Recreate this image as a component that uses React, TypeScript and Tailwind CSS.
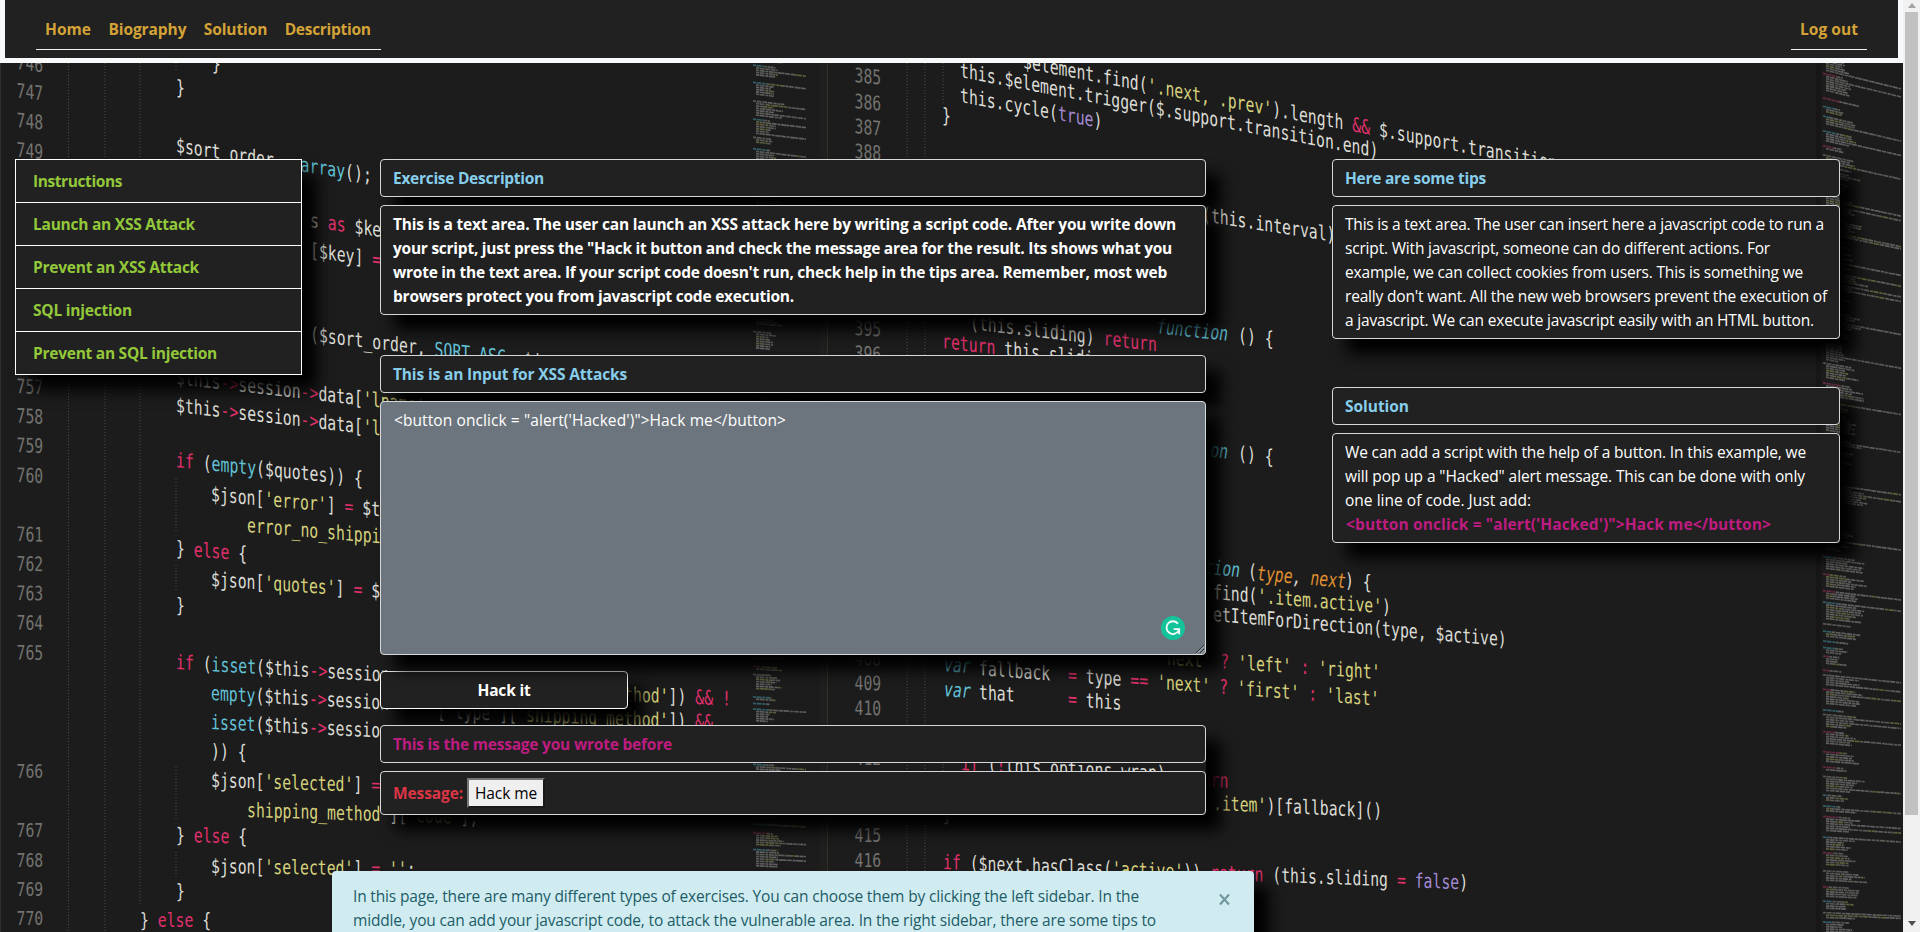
import { useLayoutEffect, useRef, useState } from "react";

const W = "#dcdcd6";
const R = "#e0306c";
const B = "#62c3d8";
const Y = "#d6d27c";
const P = "#a58ad6";
const O = "#e0912f";
const G = "#73736f";

type Seg = [string, string];
type CodeLine = { x: number; y: number; s: number; t: Seg[]; i?: boolean };

const CHAR = 8.9;

const numbersLeft: [string, number, number][] = [
  ["746", 69, 0.12], ["747", 97.5, 0.11], ["748", 127, 0.1], ["749", 156.5, 0.1],
  ["757", 393, 0.05], ["758", 422.5, 0.05], ["759", 452, 0.04], ["760", 482, 0.04],
  ["761", 541, 0.03], ["762", 570.5, 0.03], ["763", 600, 0.02], ["764", 629.5, 0.02],
  ["765", 659.5, 0.01], ["766", 778, 0], ["767", 837, 0], ["768", 866.5, 0],
  ["769", 896, 0], ["770", 925, 0],
];

const numbersRight: [string, number, number][] = [
  ["385", 82, 0.1], ["386", 108, 0.1], ["387", 133, 0.1], ["388", 158, 0.09],
  ["395", 335, 0.05], ["396", 360, 0.05], ["408", 665, 0.02], ["409", 690, 0.01],
  ["410", 715, 0.01], ["412", 765, 0], ["415", 841.5, 0], ["416", 866.5, 0],
];

const code: CodeLine[] = [
  { x: 212, y: 70, s: 0.1, t: [["}", W]] },
  { x: 176, y: 94, s: 0.1, t: [["}", W]] },
  { x: 176, y: 152, s: 0.155, t: [["$sort_order ", W], ["= ", R], ["array", B], ["();", W]] },
  { x: 310, y: 227, s: 0.14, t: [["s ", W], ["as ", R], ["$key", W]] },
  { x: 310, y: 257, s: 0.14, t: [["[$key] ", W], ["=", R]] },
  { x: 310, y: 341, s: 0.12, t: [["($sort_order, ", W], ["SORT_ASC", B], [", $json", W]] },
  { x: 176, y: 384, s: 0.115, t: [["$this", W], ["->", R], ["session", W], ["->", R], ["data[", W], ["'lname'", Y]] },
  { x: 176, y: 412, s: 0.115, t: [["$this", W], ["->", R], ["session", W], ["->", R], ["data[", W], ["'l", Y]] },
  { x: 176, y: 467, s: 0.1, t: [["if ", R], ["(", W], ["empty", B], ["($quotes)) {", W]] },
  { x: 211, y: 501, s: 0.09, t: [["$json[", W], ["'error'", Y], ["] ", W], ["=", R], [" $th", W]] },
  { x: 247, y: 532, s: 0.085, t: [["error_no_shipping", Y]] },
  { x: 176, y: 555, s: 0.08, t: [["} ", W], ["else ", R], ["{", W]] },
  { x: 211, y: 586, s: 0.07, t: [["$json[", W], ["'quotes'", Y], ["] ", W], ["=", R], [" $t", W]] },
  { x: 176, y: 612, s: 0.05, t: [["}", W]] },
  { x: 176, y: 669, s: 0.06, t: [["if ", R], ["(", W], ["isset", B], ["($this", W], ["->", R], ["session", W]] },
  { x: 211, y: 700, s: 0.055, t: [["empty", B], ["($this", W], ["->", R], ["session->", W]] },
  { x: 211, y: 729, s: 0.05, t: [["isset", B], ["($this", W], ["->", R], ["session", W]] },
  { x: 211, y: 758, s: 0.03, t: [[")) {", W]] },
  { x: 211, y: 787, s: 0.03, t: [["$json[", W], ["'selected'", Y], ["] ", W], ["=", R]] },
  { x: 247, y: 817, s: 0.03, t: [["shipping_method'", Y], ["][", W], ["'code'", Y], ["];", W]] },
  { x: 176, y: 842, s: 0.02, t: [["} ", W], ["else ", R], ["{", W]] },
  { x: 211, y: 873, s: 0.015, t: [["$json[", W], ["'selected'", Y], ["] ", W], ["=", R], [" ''", Y], [";", W]] },
  { x: 176, y: 898, s: 0, t: [["}", W]] },
  { x: 140, y: 927, s: 0, t: [["} ", W], ["else ", R], ["{", W]] },
  { x: 544, y: 698, s: 0.04, t: [["ipping_method'", Y], ["]) ", W], ["&& !", R]] },
  { x: 437, y: 718, s: 0.04, t: [["['type'][", W], ["'shipping_method'", Y], ["]) ", W], ["&&", R]] },
  { x: 1023, y: 68, s: 0.192, t: [["$element.find(", W], ["'.next, .prev'", Y], [").length ", W], ["&&", R], [" $.support.transition", W]] },
  { x: 960, y: 77, s: 0.193, t: [["this.$element.trigger($.support.transition.end)", W]] },
  { x: 960, y: 102, s: 0.185, t: [["this.cycle(", W], ["true", P], [")", W]] },
  { x: 942, y: 122, s: 0.1, t: [["}", W]] },
  { x: 1202, y: 221, s: 0.157, t: [["(this.interval)", W]] },
  { x: 970, y: 329, s: 0.12, t: [["(this.sliding) ", W], ["return", R]] },
  { x: 942, y: 348, s: 0.12, t: [["return", R], [" this.sliding", W]] },
  { x: 1156, y: 333, s: 0.11, i: true, t: [["function", B]] },
  { x: 1238, y: 342, s: 0.11, t: [["() {", W]] },
  { x: 1156, y: 451, s: 0.11, i: true, t: [["function", B]] },
  { x: 1238, y: 460, s: 0.11, t: [["() {", W]] },
  { x: 1168, y: 570, s: 0.1, i: true, t: [["function", B]] },
  { x: 1248, y: 578, s: 0.1, t: [["(", W]] },
  { x: 1256, y: 580, s: 0.09, i: true, t: [["type", O], [", ", W], ["next", O]] },
  { x: 1345, y: 587, s: 0.09, t: [[") {", W]] },
  { x: 1213, y: 599, s: 0.085, t: [["find(", W], ["'.item.active'", Y], [")", W]] },
  { x: 1213, y: 621, s: 0.086, t: [["etItemForDirection(type, $active)", W]] },
  { x: 1158, y: 664, s: 0.068, t: [["'next' ", Y], ["? ", R], ["'left' ", Y], [": ", R], ["'right'", Y]] },
  { x: 943, y: 671, s: 0.077, i: true, t: [["var", B]] },
  { x: 979, y: 675, s: 0.077, t: [["fallback  ", W], ["= ", R], ["type ", W], ["== ", R], ["'next' ", Y], ["? ", R], ["'first' ", Y], [": ", R], ["'last'", Y]] },
  { x: 943, y: 696, s: 0.077, i: true, t: [["var", B]] },
  { x: 979, y: 699, s: 0.077, t: [["that      ", W], ["= ", R], ["this", W]] },
  { x: 961, y: 770, s: 0.05, t: [["if ", R], ["(", W], ["!", R], ["this.options.wrap)", W]] },
  { x: 1175, y: 785, s: 0.05, t: [["return", R]] },
  { x: 1213, y: 810, s: 0.045, t: [[".item'", Y], [")[fallback]()", W]] },
  { x: 943, y: 821, s: 0, t: [["}", W]] },
  { x: 943, y: 869, s: 0.039, t: [["if ", R], ["($next.hasClass(", W], ["'active'", Y], ["))", W], [" return ", R], ["(this.sliding ", W], ["= ", R], ["false", P], [")", W]] },
];

const guides: [number, number, number][] = [
  [68.5, 63, 932], [105, 63, 932], [140, 63, 905], [176, 63, 72], [176, 479, 531],
  [176, 565, 590], [176, 767, 820], [176, 852, 878], [907, 63, 932], [925, 63, 932],
  [943, 63, 105], [943, 755, 775],
];

function makeBars(x: number, width: number, top: number, bottom: number, seed: number, steep: number) {
  let n = seed;
  const rnd = () => {
    n = (n * 16807) % 2147483647;
    return n / 2147483647;
  };
  const colors = ["#77777a", "#6b6b68", "#77777a", "#73736c", "#6b6b68", "#74744a"];
  const heads = ["#3c7480", "#7b2f4b", "#6b6b68", "#3c7480"];
  const bars: { d: string; c: string }[] = [];
  let y = top;
  while (y < bottom) {
    const block = 1 + Math.floor(rnd() * 8);
    const base = 18 + rnd() * width * 0.3;
    const slope = steep - ((steep - 0.04) * y) / 932;
    for (let k = 0; k < block && y < bottom; k++) {
      let px = x + (k === 0 ? 0 : 3);
      const len = rnd() > 0.9 ? width : base * (0.6 + rnd() * 0.5);
      const end = Math.min(x + width, px + len);
      let first = true;
      while (px < end) {
        const w = Math.min(end - px, 5 + rnd() * 14);
        const c = k === 0 && first ? heads[Math.floor(rnd() * 4)] : colors[Math.floor(rnd() * colors.length)];
        const y0 = y + (px - x) * slope;
        bars.push({ d: `M${px.toFixed(1)} ${y0.toFixed(1)}l${w.toFixed(1)} ${(w * slope).toFixed(1)}`, c });
        px += w;
        first = false;
      }
      y += 2.3;
    }
    y += 1.5 + rnd() * 5;
  }
  return bars;
}

const minimap = [
  ...makeBars(753, 53, 50, 932, 4711, 0.13),
  ...makeBars(1823, 78, 45, 932, 9127, 0.26),
];

function CodeText({ line }: { line: CodeLine }) {
  const count = line.t.reduce((sum, [s]) => sum + s.length, 0);
  return (
    <text
      transform={`matrix(0.739 ${(line.s * 0.739).toFixed(4)} ${line.i ? -0.16 : 0} 1 ${line.x} ${line.y})`}
      fontSize="20"
      textLength={(count * CHAR) / 0.739}
      className="whitespace-pre"
    >
      {line.t.map(([s, c], i) => (
        <tspan key={i} fill={c}>{s}</tspan>
      ))}
    </text>
  );
}

function Backdrop() {
  return (
    <svg
      className="absolute inset-0 h-[932px] w-[1903px] bg-[#1c1c1c] font-['DejaVu_Sans_Mono',monospace]"
      viewBox="0 0 1903 932"
      aria-hidden="true"
    >
      <rect x="0" y="0" width="1" height="932" fill="#303030" />
      <rect x="820" y="0" width="7" height="932" fill="#1f1f1e" />
      <rect x="827" y="0" width="1" height="932" fill="#303029" />
      <rect x="1816" y="0" width="5" height="932" fill="#171717" />
      {guides.map(([x, a, b], i) => (
        <path key={i} d={`M${x} ${a}V${b}`} stroke="#4b4b48" strokeDasharray="1 2" />
      ))}
      {minimap.map((b, i) => (
        <path key={i} d={b.d} stroke={b.c} strokeWidth="1.7" strokeDasharray="3 0.6 5 0.8" opacity="0.75" />
      ))}
      {numbersLeft.map(([t, y, s]) => (
        <CodeText key={t} line={{ x: 16.5, y, s, t: [[t, G]] }} />
      ))}
      {numbersRight.map(([t, y, s]) => (
        <CodeText key={t} line={{ x: 854.5, y, s, t: [[t, G]] }} />
      ))}
      {code.map((l, i) => (
        <CodeText key={i} line={l} />
      ))}
    </svg>
  );
}

/* A single line of text whose tracking is computed so that it spans `w` pixels. */
function Fit({ w, children, className = "" }: { w: number; children: string; className?: string }) {
  const ref = useRef<HTMLSpanElement>(null);
  const [tracking, setTracking] = useState(0);
  useLayoutEffect(() => {
    if (ref.current) {
      setTracking((w - ref.current.getBoundingClientRect().width) / children.length);
    }
  }, [w, children]);
  return (
    <span className={`block whitespace-pre ${className}`}>
      <span ref={ref} className="inline-block" style={{ letterSpacing: `${tracking}px` }}>
        {children}
      </span>
    </span>
  );
}

const box = "rounded border border-[#d5d8d8] bg-[#212121] px-3 py-[6px]";
const shadow = "shadow-[15px_15px_15px_#000]";

const sidebar: [string, number][] = [
  ["Instructions", 89], ["Launch an XSS Attack", 162], ["Prevent an XSS Attack", 166],
  ["SQL injection", 99], ["Prevent an SQL injection", 184],
];

const links: [string, number][] = [["Home", 46], ["Biography", 78], ["Solution", 63.5], ["Description", 86]];

export default function App() {
  return (
    <div className="relative flex h-[932px] w-full overflow-hidden bg-[#1c1c1c] font-['Open_Sans',sans-serif] text-[15.5px] leading-6 text-white">
      <Backdrop />
      <div className="relative flex h-full w-[1903px] shrink-0 flex-col overflow-hidden">
        <nav className="flex h-[63px] shrink-0 items-start justify-between border-x-[5px] border-b-[5px] border-[#f8f9fa] bg-[#212121] pr-[31px] pl-[31px] font-bold text-[#d4a337]">
          <div className="flex h-[50px] w-[345px] gap-[17.4px] border-b border-[#f0f0f0] pt-[17px] pl-[9px]">
            {links.map(([t, w]) => (
              <a key={t}><Fit w={w}>{t}</Fit></a>
            ))}
          </div>
          <div className="h-[50px] border-b border-[#f0f0f0] px-[9px] pt-[17px]">
            <Fit w={58}>Log out</Fit>
          </div>
        </nav>

        <div className="mt-24 flex shrink-0 items-start">
          <ul className={`ml-[15px] w-[287px] border border-white bg-[#212121] font-bold text-[#93c83a] ${shadow}`}>
            {sidebar.map(([t, w]) => (
              <li key={t} className="h-[43px] border-b border-white pt-[9px] pl-[17px] last:h-[42px] last:border-b-0">
                <Fit w={w}>{t}</Fit>
              </li>
            ))}
          </ul>

          <main className="ml-[78px] flex w-[826px] flex-col">
            <div className={`${box} ${shadow} font-bold text-[#87ceeb]`}><Fit w={151}>Exercise Description</Fit></div>
            <div className={`${box} ${shadow} relative mt-2 font-bold`}>
              <Fit w={783}>This is a text area. The user can launch an XSS attack here by writing a script code. After you write down</Fit>
              <Fit w={779}>{'your script, just press the "Hack it button and check the message area for the result. Its shows what you'}</Fit>
              <Fit w={774}>wrote in the text area. If your script code doesn't run, check help in the tips area. Remember, most web</Fit>
              <Fit w={401}>browsers protect you from javascript code execution.</Fit>
            </div>
            <div className={`${box} ${shadow} mt-10 font-bold text-[#87ceeb]`}><Fit w={234}>This is an Input for XSS Attacks</Fit></div>
            <div className="relative mt-2 h-[254px] rounded border border-[#d5d8d8] bg-[#6c757d] px-[13px] py-[6px] shadow-[15px_15px_15px_#000]">
              <Fit w={392}>{"<button onclick = \"alert('Hacked')\">Hack me</button>"}</Fit>
              <svg className="absolute right-[20px] bottom-[14px] h-6 w-6" viewBox="0 0 24 24">
                <circle cx="12" cy="12" r="12" fill="#15c39a" />
                <path d="M16.9 7.6A6.4 6.4 0 1 0 17.6 14.6M12.6 13.2H18.2V18.2" fill="none" stroke="#fff" strokeWidth="1.8" />
              </svg>
              <svg className="absolute right-0 bottom-0 h-[10px] w-[10px]" viewBox="0 0 10 10">
                <path d="M1 9L9 1M5 9L9 5" stroke="#2c2f33" />
                <path d="M2 9.5L9.5 2M6 9.5L9.5 6" stroke="#cfd3d6" strokeWidth="0.8" />
              </svg>
            </div>
            <button className="mt-4 flex h-[38px] w-[248px] justify-center rounded border border-[#f8f9fa] bg-[#212121] pt-[6px] font-bold shadow-[15px_15px_15px_#000]">
              <Fit w={53}>Hack it</Fit>
            </button>
            <div className={`mt-4 flex flex-col gap-2 rounded ${shadow}`}>
              <div className={`${box} font-bold text-[#bd1c80]`}><Fit w={279}>This is the message you wrote before</Fit></div>
              <div className={`${box} flex h-[44px] items-center gap-1`}>
                <Fit w={70} className="font-bold text-[#dc3545]">Message:</Fit>
                <button className="flex h-[30px] items-center border-2 border-t-[#767676] border-r-[#1a1a1a] border-b-[#1a1a1a] border-l-[#767676] bg-[#efefef] px-[6px] text-black">
                  <Fit w={62}>Hack me</Fit>
                </button>
              </div>
            </div>
          </main>

          <aside className="ml-[126px] flex w-[508px] flex-col gap-12">
            <section className={`flex flex-col gap-2 rounded ${shadow}`}>
              <div className={`${box} font-bold text-[#87ceeb]`}><Fit w={141}>Here are some tips</Fit></div>
              <div className={box}>
                <Fit w={479}>This is a text area. The user can insert here a javascript code to run a</Fit>
                <Fit w={425}>script. With javascript, someone can do different actions. For</Fit>
                <Fit w={458}>example, we can collect cookies from users. This is something we</Fit>
                <Fit w={482}>really don't want. All the new web browsers prevent the execution of</Fit>
                <Fit w={469}>a javascript. We can execute javascript easily with an HTML button.</Fit>
              </div>
            </section>
            <section className={`flex flex-col gap-2 rounded ${shadow}`}>
              <div className={`${box} font-bold text-[#87ceeb]`}><Fit w={64}>Solution</Fit></div>
              <div className={box}>
                <Fit w={461}>We can add a script with the help of a button. In this example, we</Fit>
                <Fit w={460}>{'will pop up a "Hacked" alert message. This can be done with only'}</Fit>
                <Fit w={186}>one line of code. Just add:</Fit>
                <Fit w={425} className="pl-px font-bold text-[#bd1c80]">{"<button onclick = \"alert('Hacked')\">Hack me</button>"}</Fit>
              </div>
            </section>
          </aside>
        </div>

        <div className="mt-14 ml-[332px] flex h-[120px] w-[922px] shrink-0 justify-between rounded bg-[#d1ecf1] px-[21px] pt-[13px] text-[#1c5c67] shadow-[15px_15px_15px_#000]">
          <div>
            <Fit w={786}>In this page, there are many different types of exercises. You can choose them by clicking the left sidebar. In the</Fit>
            <Fit w={803}>middle, you can add your javascript code, to attack the vulnerable area. In the right sidebar, there are some tips to</Fit>
          </div>
          <svg className="mt-[10px] mr-[3px] h-[11px] w-[11px]" viewBox="0 0 11 11">
            <path d="M1 0.5L10 10.5M10 0.5L1 10.5" stroke="#6f979e" strokeWidth="2.2" />
          </svg>
        </div>
      </div>

      <div className="relative flex w-[17px] flex-col items-center justify-between bg-[#f1f1f1]">
        <svg className="mt-[3px] h-[5px] w-2 shrink-0" viewBox="0 0 8 5"><path d="M4 0L8 5H0Z" fill="#a3a3a3" /></svg>
        <div className="mt-1 h-[803px] w-[13px] shrink-0 bg-[#c1c1c1]" />
        <div className="flex-1" />
        <svg className="mb-[6px] h-[5px] w-2 shrink-0" viewBox="0 0 8 5"><path d="M4 5L0 0H8Z" fill="#505050" /></svg>
      </div>
    </div>
  );
}
